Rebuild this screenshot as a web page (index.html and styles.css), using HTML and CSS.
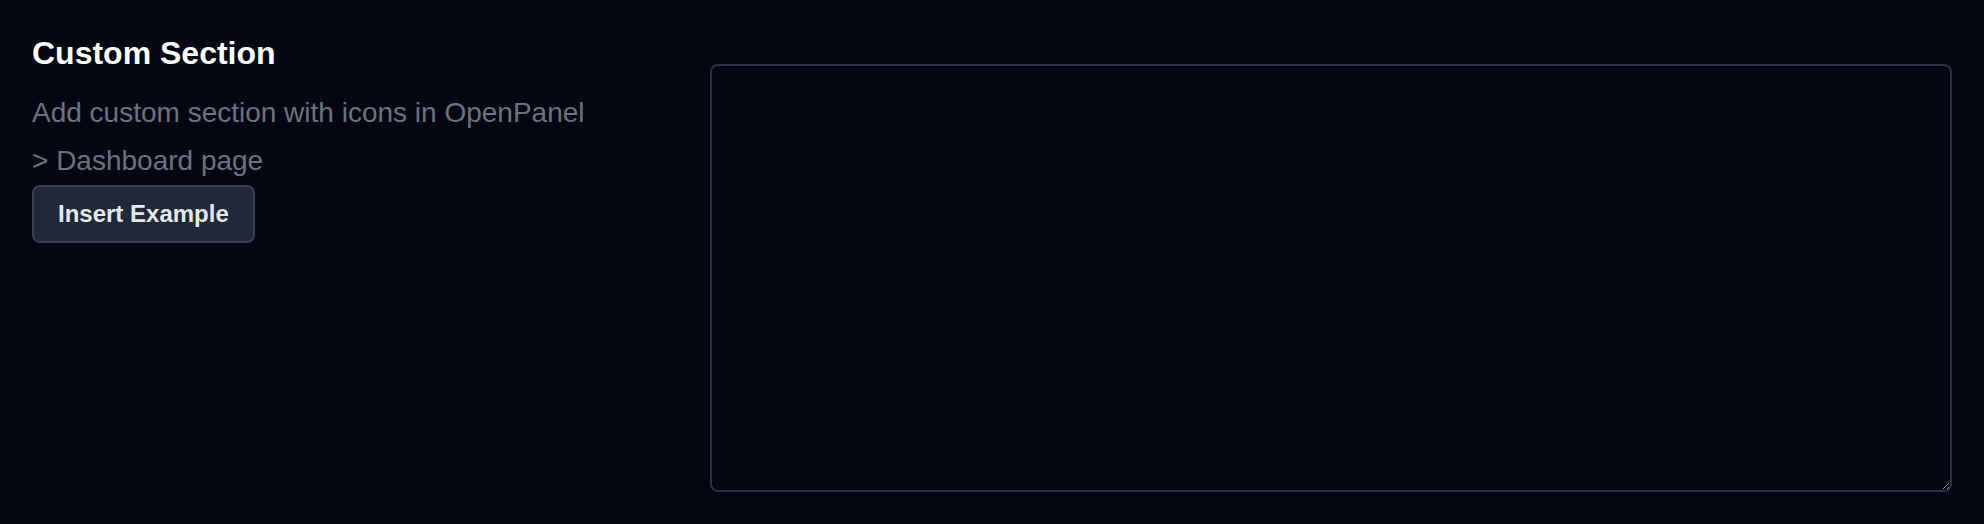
FILE: index.html
```html
<!DOCTYPE html>
<html lang="en">
<head>
<meta charset="utf-8">
<title>Custom Section</title>
<link rel="stylesheet" href="styles.css">
</head>
<body>
<div class="page">
  <div class="info">
    <h2 class="title">Custom Section</h2>
    <p class="desc">Add custom section with icons in OpenPanel &gt; Dashboard page</p>
    <button class="btn" type="button">Insert Example</button>
  </div>
  <div class="editor">
    <textarea class="code"></textarea>
  </div>
</div>
</body>
</html>
```
FILE: styles.css
```css
html, body {
  margin: 0;
  padding: 0;
  background: #030712;
  height: 524px;
  overflow: hidden;
}
body {
  font-family: "Liberation Sans", Arial, sans-serif;
  color: #e5e7eb;
}
.page {
  display: grid;
  grid-template-columns: 564px 1fr;
  column-gap: 114px;
  padding: 32px;
  box-sizing: border-box;
  height: 524px;
}
.info {
  display: flex;
  flex-direction: column;
  align-items: flex-start;
}
.title {
  margin: 0 0 15px;
  font-size: 32px;
  line-height: 42px;
  font-weight: 700;
  color: #ffffff;
}
.desc {
  margin: 0;
  font-size: 28px;
  line-height: 48px;
  color: #6b7280;
}
.btn {
  font-family: "Liberation Sans", Arial, sans-serif;
  font-size: 24px;
  line-height: 36px;
  font-weight: 700;
  color: #e5e7eb;
  background: #1f2937;
  border: 2px solid #374151;
  border-radius: 8px;
  padding: 9px 24px;
  margin: 0;
  cursor: pointer;
}
.editor {
  display: flex;
  padding-top: 32px;
}
.code {
  display: block;
  flex: 1;
  box-sizing: border-box;
  height: 428px;
  margin: 0;
  background: #030712;
  border: 2px solid #2b3240;
  border-radius: 8px;
  color: #e5e7eb;
  color-scheme: dark;
  outline: none;
}
```
